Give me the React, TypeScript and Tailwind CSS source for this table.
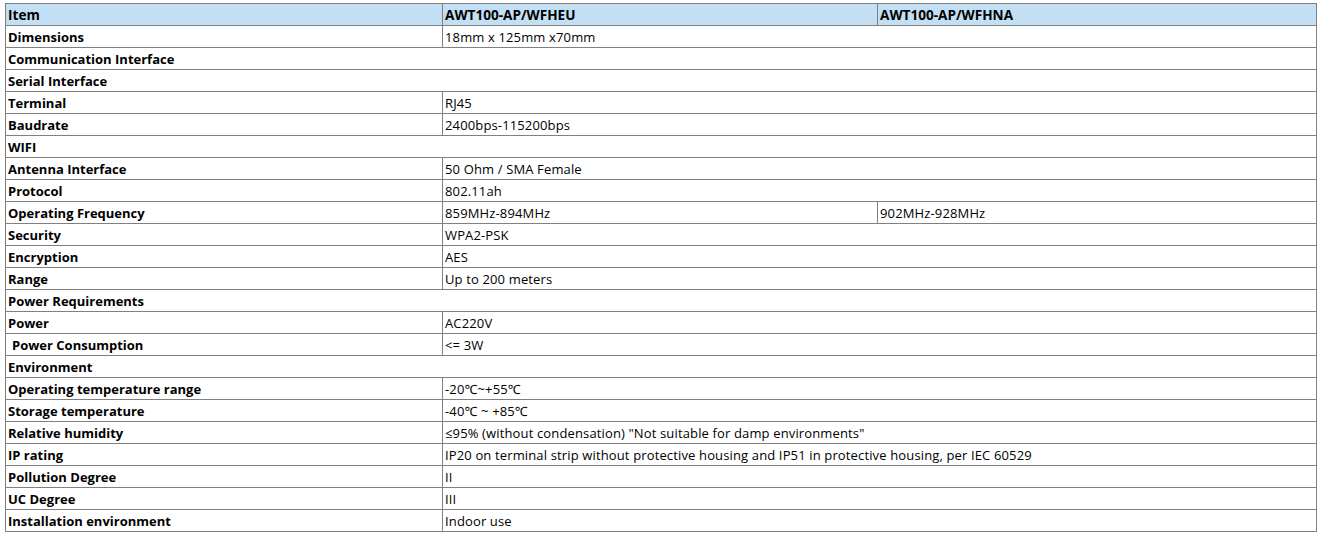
type Row =
  | { kind: "section"; label: string }
  | { kind: "two"; label: string; value: string; pad?: boolean }
  | { kind: "three"; label: string; a: string; b: string };

const rows: Row[] = [
  { kind: "two", label: "Dimensions", value: "18mm x 125mm x70mm" },
  { kind: "section", label: "Communication Interface" },
  { kind: "section", label: "Serial Interface" },
  { kind: "two", label: "Terminal", value: "RJ45" },
  { kind: "two", label: "Baudrate", value: "2400bps-115200bps" },
  { kind: "section", label: "WIFI" },
  { kind: "two", label: "Antenna Interface", value: "50 Ohm / SMA Female" },
  { kind: "two", label: "Protocol", value: "802.11ah" },
  { kind: "three", label: "Operating Frequency", a: "859MHz-894MHz", b: "902MHz-928MHz" },
  { kind: "two", label: "Security", value: "WPA2-PSK" },
  { kind: "two", label: "Encryption", value: "AES" },
  { kind: "two", label: "Range", value: "Up to 200 meters" },
  { kind: "section", label: "Power Requirements" },
  { kind: "two", label: "Power", value: "AC220V" },
  { kind: "two", label: "Power Consumption", value: "<= 3W", pad: true },
  { kind: "section", label: "Environment" },
  { kind: "two", label: "Operating temperature range", value: "-20℃~+55℃" },
  { kind: "two", label: "Storage temperature", value: "-40℃ ~ +85℃" },
  { kind: "two", label: "Relative humidity", value: '≤95% (without condensation) "Not suitable for damp environments"' },
  { kind: "two", label: "IP rating", value: "IP20 on terminal strip without protective housing and IP51 in protective housing, per IEC 60529" },
  { kind: "two", label: "Pollution Degree", value: "II" },
  { kind: "two", label: "UC Degree", value: "III" },
  { kind: "two", label: "Installation environment", value: "Indoor use" },
];

const cell = "border border-[#808080] h-[22px] px-[2px] py-0 align-middle whitespace-nowrap leading-[20px]";
const val = `${cell} tracking-[0.14px]`;

export default function App() {
  return (
    <div className="bg-white w-[1323px] h-[540px] pt-[3px] pl-[5px] text-[13px] text-black" style={{ fontFamily: '"Open Sans", "Noto Sans", Arial, sans-serif' }}>
      <table className="table-fixed border-collapse w-[1311px]">
        <colgroup>
          <col className="w-[437px]" />
          <col className="w-[435px]" />
          <col className="w-[439px]" />
        </colgroup>
        <thead>
          <tr className="bg-[#c3dff3] text-[13.6px]">
            <th className={`${cell} text-left font-bold`}>Item</th>
            <th className={`${cell} text-left font-bold`}>AWT100-AP/WFHEU</th>
            <th className={`${cell} text-left font-bold`}>AWT100-AP/WFHNA</th>
          </tr>
        </thead>
        <tbody>
          {rows.map((r, i) => {
            if (r.kind === "section") {
              return (
                <tr key={i}>
                  <td colSpan={3} className={`${cell} font-bold`}>{r.label}</td>
                </tr>
              );
            }
            if (r.kind === "three") {
              return (
                <tr key={i}>
                  <td className={`${cell} font-bold`}>{r.label}</td>
                  <td className={val}>{r.a}</td>
                  <td className={val}>{r.b}</td>
                </tr>
              );
            }
            return (
              <tr key={i}>
                <td className={`${cell} font-bold ${r.pad ? "pl-[6px]" : ""}`}>{r.label}</td>
                <td colSpan={2} className={val}>{r.value}</td>
              </tr>
            );
          })}
        </tbody>
      </table>
    </div>
  );
}
